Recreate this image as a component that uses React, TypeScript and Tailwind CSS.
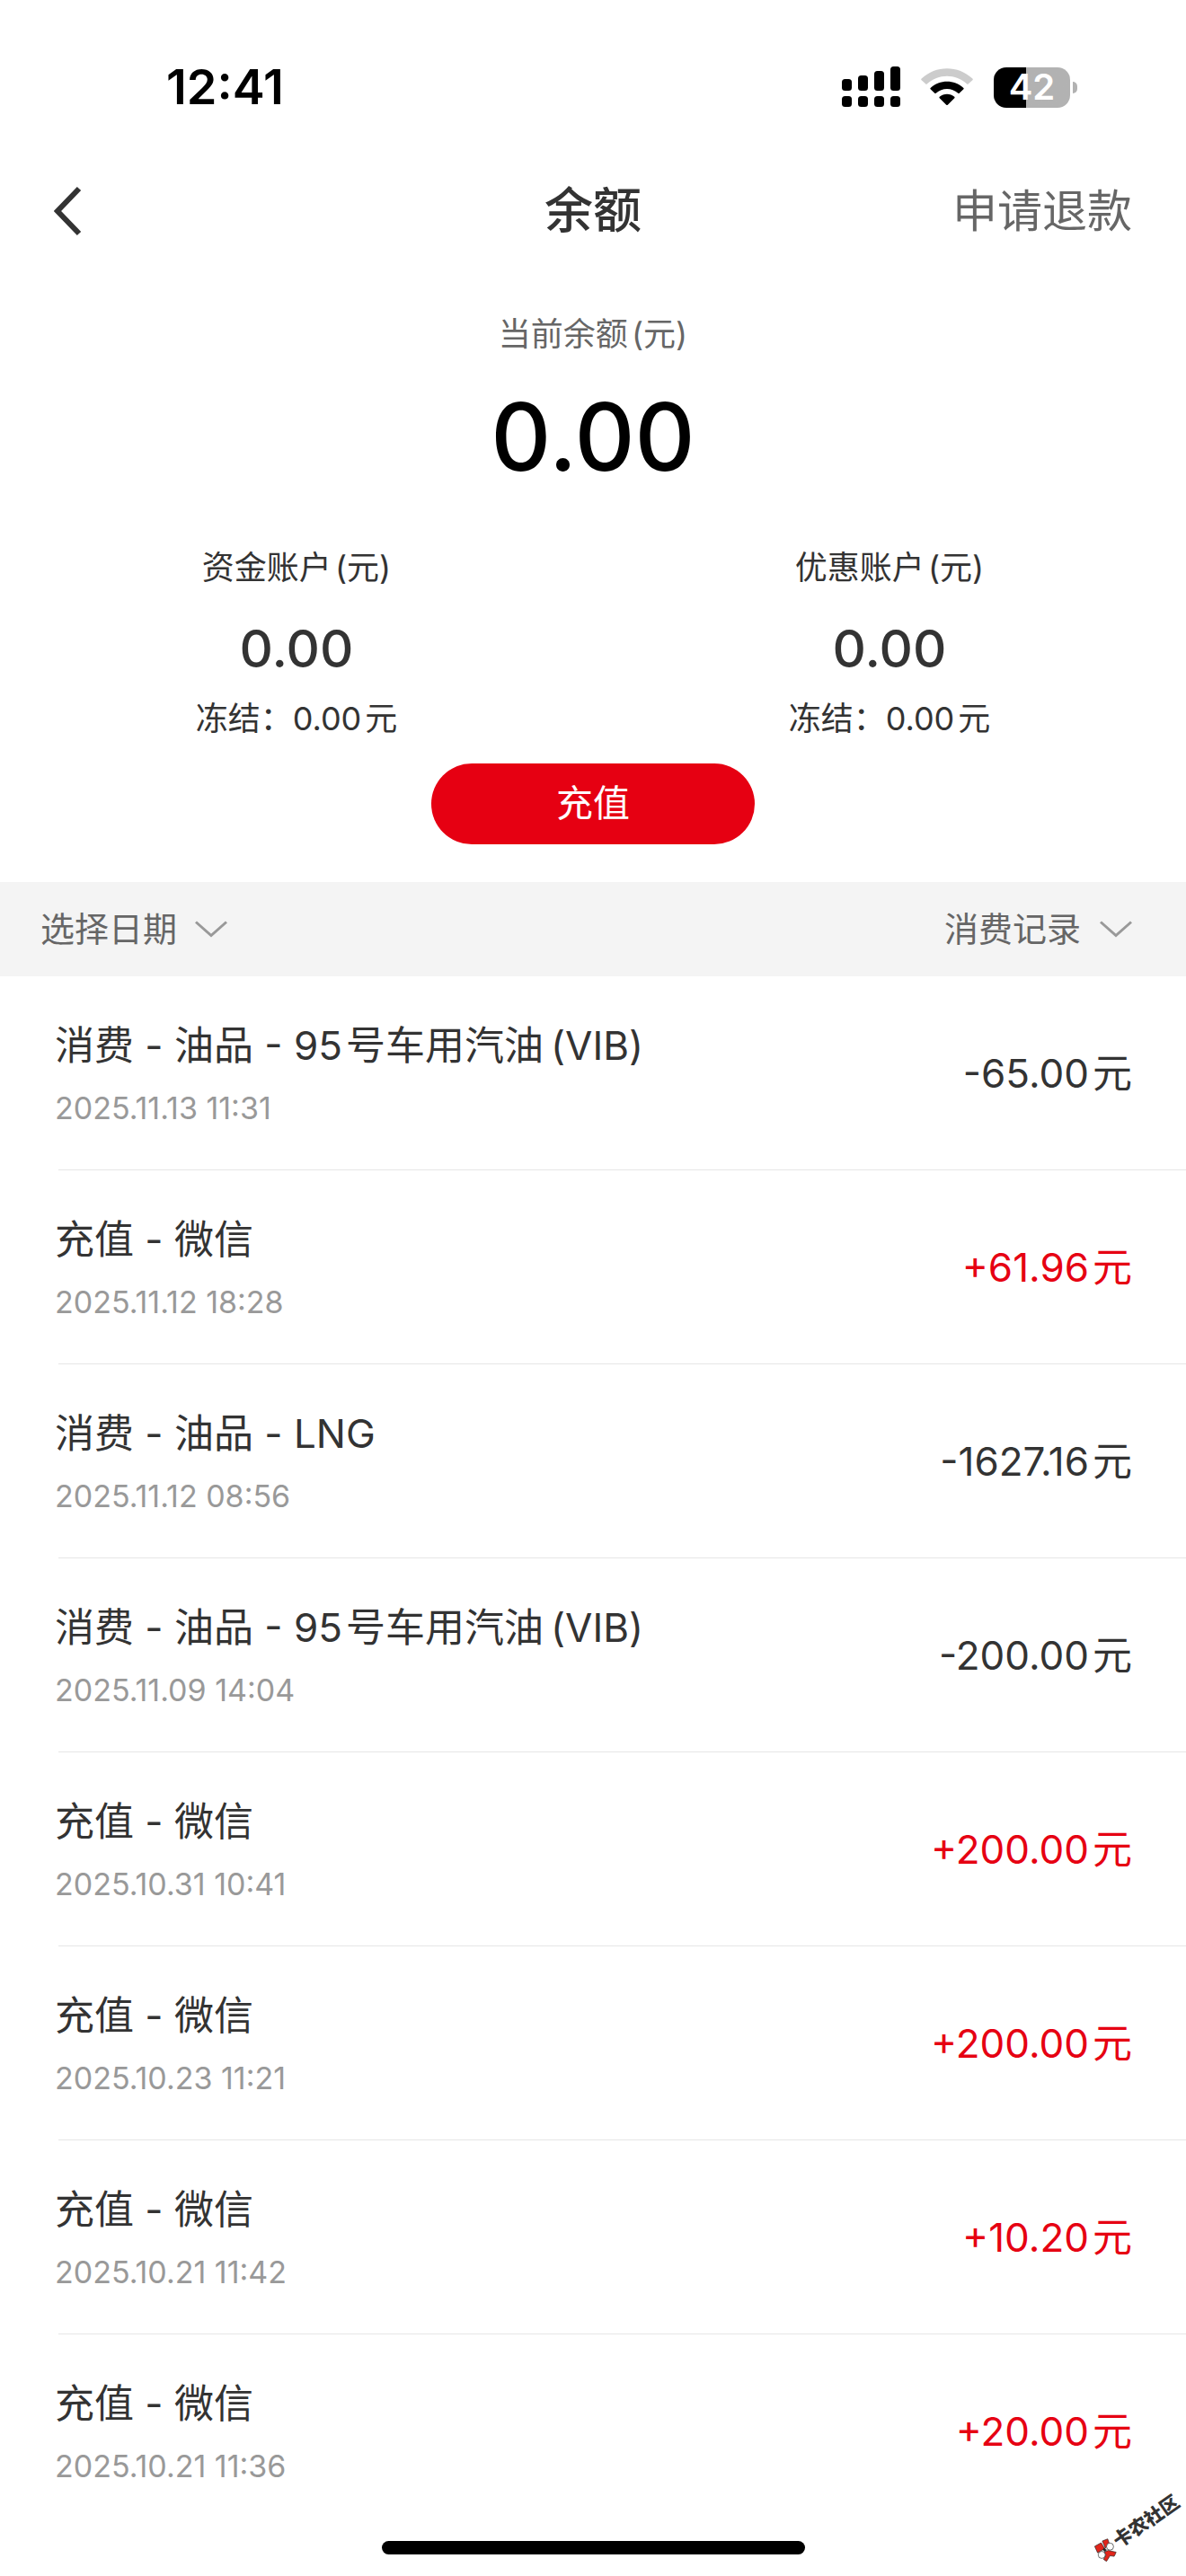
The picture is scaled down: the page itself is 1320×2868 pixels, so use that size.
type Entry = {
  title: string;
  product?: string;
  grade?: string;
  time: string;
  amount: string;
};

const entries: Entry[] = [
  { title: "消费 - 油品 - 95", product: "号车用汽油", grade: "(VIB)", time: "2025.11.13 11:31", amount: "-65.00" },
  { title: "充值 - 微信", time: "2025.11.12 18:28", amount: "+61.96" },
  { title: "消费 - 油品 - LNG", time: "2025.11.12 08:56", amount: "-1627.16" },
  { title: "消费 - 油品 - 95", product: "号车用汽油", grade: "(VIB)", time: "2025.11.09 14:04", amount: "-200.00" },
  { title: "充值 - 微信", time: "2025.10.31 10:41", amount: "+200.00" },
  { title: "充值 - 微信", time: "2025.10.23 11:21", amount: "+200.00" },
  { title: "充值 - 微信", time: "2025.10.21 11:42", amount: "+10.20" },
  { title: "充值 - 微信", time: "2025.10.21 11:36", amount: "+20.00" },
];

function SignalIcon() {
  return (
    <svg width="65" height="46" viewBox="0 0 65 46" aria-hidden="true">
      <rect x="0" y="14" width="11" height="13" rx="3.5" />
      <rect x="18" y="10" width="11" height="17" rx="3.5" />
      <rect x="36" y="5" width="11" height="22" rx="3.5" />
      <rect x="54" y="0" width="11" height="27" rx="3.5" />
      <rect x="0" y="33" width="11" height="12" rx="3.5" />
      <rect x="18" y="33" width="11" height="12" rx="3.5" />
      <rect x="36" y="33" width="11" height="12" rx="3.5" />
      <rect x="54" y="33" width="11" height="12" rx="3.5" />
    </svg>
  );
}

function WifiIcon() {
  return (
    <svg width="58" height="42" viewBox="0 0 58 42" aria-hidden="true">
      <path
        d="M0.6 11.6C16.5 -3.6 41.5 -3.6 57.4 11.6Q58.2 12.4 57.4 13.2L52.6 17.6Q52 18.2 51.3 17.5C38.8 5.8 19.2 5.8 6.7 17.5Q6 18.2 5.4 17.6L0.6 13.2Q-0.2 12.4 0.6 11.6Z"
        fill="#cccccc"
      />
      <path d="M10.6 21.9C21 12.3 37 12.3 47.4 21.9Q48.1 22.6 47.4 23.3L42.7 27.8Q42 28.4 41.3 27.8C34.3 21.5 23.7 21.5 16.7 27.8Q16 28.4 15.3 27.8L10.6 23.3Q9.9 22.6 10.6 21.9Z" />
      <path d="M20.7 31.8C25.4 27.7 32.6 27.7 37.3 31.8Q38 32.5 37.3 33.2L29.8 40.7Q29 41.5 28.2 40.7L20.7 33.2Q20 32.5 20.7 31.8Z" />
    </svg>
  );
}

function Battery() {
  return (
    <div className="flex items-center gap-[3px]">
      <div className="flex h-[45px] w-[85px] items-center justify-center rounded-[14px] bg-linear-to-r from-black from-[42%] to-[#b2b2b2] to-[42%] text-[40px] leading-none font-semibold text-white">
        42
      </div>
      <div className="h-[13px] w-[5px] rounded-r-full bg-[#b2b2b2]" />
    </div>
  );
}

function ChevronDown() {
  return (
    <svg width="36" height="19" viewBox="0 0 36 19" fill="none" stroke="#999999" strokeWidth="3" aria-hidden="true">
      <path d="M1 1.5L18 16.5L35 1.5" />
    </svg>
  );
}

function CommunityLogo() {
  return (
    <svg width="25" height="27" viewBox="0 0 76 80" stroke="#222222" strokeWidth="2" className="rotate-[35deg]" aria-hidden="true">
      <path d="M2 28L24 16L36 36L12 50Z" fill="#e1251b" />
      <path d="M28 10L46 3L52 20L38 34Z" fill="#e1251b" />
      <path d="M34 48L48 42L75 48L68 62L54 60L42 79L32 72L40 58Z" fill="#e1251b" />
      <circle cx="54" cy="29" r="12" fill="#ffffff" />
      <circle cx="26" cy="57" r="12" fill="#ffffff" />
      <path d="M34 34L42 40L37 46L30 40Z" fill="#222222" />
    </svg>
  );
}

function Account({ name }: { name: string }) {
  return (
    <div className="flex flex-col items-center text-[#333333]">
      <h2 className="text-[36px] leading-[52px]">
        {name}
        <span className="ml-1">(元)</span>
      </h2>
      <p className="mt-6 text-[58px] leading-[80px] font-medium">0.00</p>
      <p className="mt-3 text-[36px] leading-[52px]">
        冻结：0.00<span className="ml-1">元</span>
      </p>
    </div>
  );
}

function Row({ entry }: { entry: Entry }) {
  const income = entry.amount.startsWith("+");
  return (
    <li className="ml-[65px] flex h-[216px] items-center justify-between border-b border-[#e6e6e6] pr-[60px] last:border-transparent">
      <div className="-ml-1">
        <p className="text-[44px] leading-[64px] text-[#333333]">
          {entry.title}
          {entry.product && <span className="ml-1">{entry.product}</span>}
          {entry.grade && <span className="ml-2">{entry.grade}</span>}
        </p>
        <p className="mt-[14px] text-[34px] leading-[48px] text-[#999999]">{entry.time}</p>
      </div>
      <p className={income ? "text-[44px] text-[#e60012]" : "text-[44px] text-[#333333]"}>
        {entry.amount}
        <span className="ml-1">元</span>
      </p>
    </li>
  );
}

export default function App() {
  return (
    <main className="relative min-h-screen overflow-hidden bg-white font-['Inter','Noto_Sans_CJK_SC',sans-serif]">
      <div className="flex h-44 items-center justify-between pt-[18px] pr-[121px] pl-[185px]">
        <span className="text-[54px] leading-none font-semibold">12:41</span>
        <div className="flex items-center gap-[23px]">
          <SignalIcon />
          <WifiIcon />
          <Battery />
        </div>
      </div>

      <header className="grid h-[118px] grid-cols-3 items-center px-[60px]">
        <button aria-label="返回" className="justify-self-start">
          <svg width="34" height="56" viewBox="0 0 34 56" fill="none" stroke="#333333" strokeWidth="6" aria-hidden="true">
            <path d="M28 3L4 28L28 53" />
          </svg>
        </button>
        <h1 className="justify-self-center text-[54px] leading-none font-medium text-[#333333]">余额</h1>
        <button className="justify-self-end text-[50px] leading-none text-[#666666]">申请退款</button>
      </header>

      <section className="flex flex-col items-center pt-[52px]">
        <p className="text-[36px] leading-[52px] text-[#666666]">
          当前余额<span className="ml-1">(元)</span>
        </p>
        <p className="mt-[28px] text-[104px] leading-[120px] font-medium text-black">0.00</p>
        <div className="mt-[60px] grid w-full grid-cols-2">
          <Account name="资金账户" />
          <Account name="优惠账户" />
        </div>
        <button className="mt-6 h-[90px] w-[360px] rounded-full bg-[#e60012] text-[41px] text-white">充值</button>
      </section>

      <div className="mt-[42px] flex h-[105px] items-center justify-between bg-[#f4f4f4] pr-[60px] pl-[45px] text-[38px] text-[#666666]">
        <button className="flex items-center gap-5">
          选择日期
          <ChevronDown />
        </button>
        <label className="flex items-center gap-5">
          <select aria-label="记录类型" className="appearance-none bg-transparent outline-none">
            <option>消费记录</option>
          </select>
          <ChevronDown />
        </label>
      </div>

      <ul>
        {entries.map((entry) => (
          <Row key={entry.time} entry={entry} />
        ))}
      </ul>

      <div className="mx-auto mt-[14px] mb-6 h-[15px] w-[471px] rounded-full bg-black" />

      <div className="absolute right-0 bottom-[40px] flex -rotate-[35deg] items-center gap-px">
        <CommunityLogo />
        <span className="text-[21px] leading-none font-black text-[#333333]">卡农社区</span>
      </div>
    </main>
  );
}
